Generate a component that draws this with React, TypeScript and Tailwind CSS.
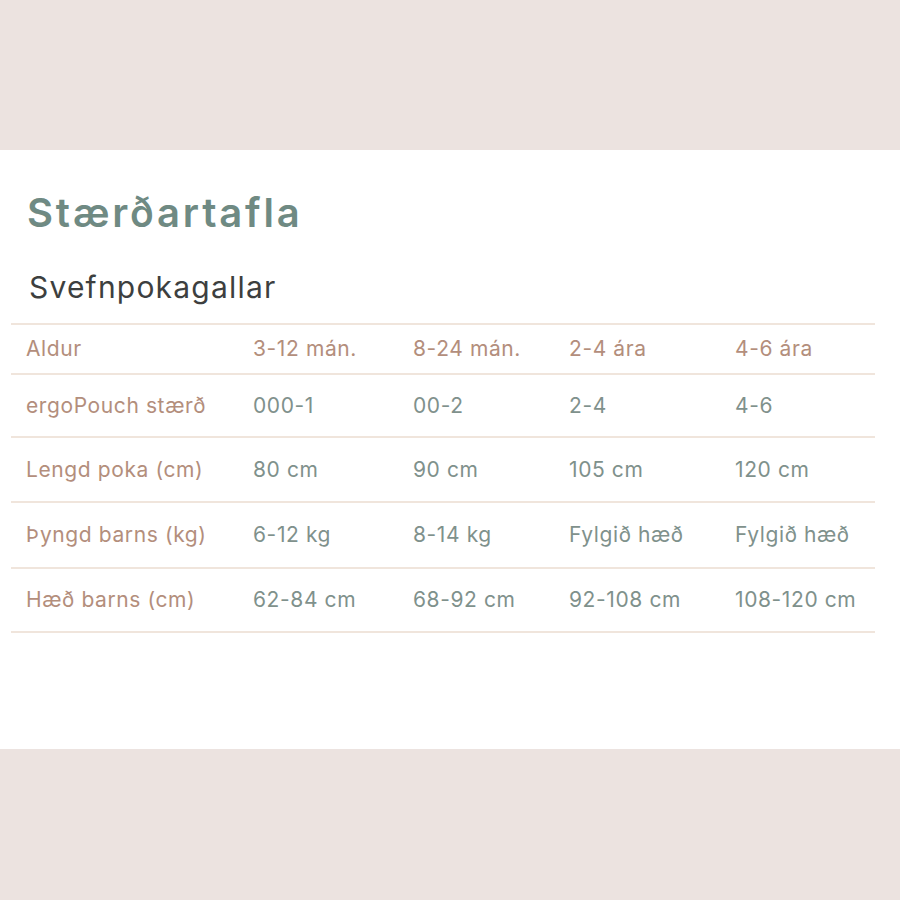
import React from "react";

const rows: { label: string; values: string[]; header?: boolean; h: string }[] = [
  { label: "Aldur", values: ["3-12 mán.", "8-24 mán.", "2-4 ára", "4-6 ára"], header: true, h: "h-[50px]" },
  { label: "ergoPouch stærð", values: ["000-1", "00-2", "2-4", "4-6"], h: "h-[63px]" },
  { label: "Lengd poka (cm)", values: ["80 cm", "90 cm", "105 cm", "120 cm"], h: "h-[65px]" },
  { label: "Þyngd barns (kg)", values: ["6-12 kg", "8-14 kg", "Fylgið hæð", "Fylgið hæð"], h: "h-[66px]" },
  { label: "Hæð barns (cm)", values: ["62-84 cm", "68-92 cm", "92-108 cm", "108-120 cm"], h: "h-[64px]" },
];

export default function App() {
  return (
    <div className="w-[900px] h-[900px] bg-[#ece3e0] flex flex-col" style={{ fontFamily: "Inter, 'Noto Sans', sans-serif" }}>
      <div className="h-[150px] shrink-0" />
      <div className="h-[599px] shrink-0 bg-white pl-[11px] pr-[25px] pt-[35px]">
        <h1 className="pl-[16px] text-[40px] leading-[56px] font-semibold text-[#6f8a83] tracking-[2.8px]">Stærðartafla</h1>
        <h2 className="pl-[18px] mt-[26px] text-[30px] leading-[40px] font-normal text-[#3d3f3f] tracking-[1.2px]">Svefnpokagallar</h2>
        <div className="mt-[16px] border-t-2 border-[#f0e5dc]">
          {rows.map((r) => (
            <div
              key={r.label}
              className={`grid grid-cols-[227px_160px_156px_166px_1fr] items-center pl-[15px] border-b-2 border-[#f0e5dc] text-[21px] tracking-[0.6px] ${r.h}`}
            >
              <div className="text-[#b38e7c] whitespace-nowrap">{r.label}</div>
              {r.values.map((v, i) => (
                <div key={i} className={`whitespace-nowrap ${r.header ? "text-[#b38e7c]" : "text-[#7f918c]"}`}>
                  {v}
                </div>
              ))}
            </div>
          ))}
        </div>
      </div>
      <div className="flex-1" />
    </div>
  );
}
